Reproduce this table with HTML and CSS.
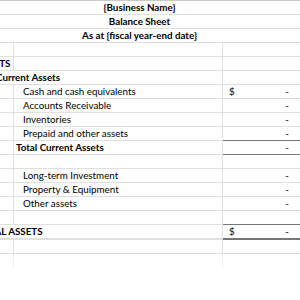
FILE: index.html
```html
<!DOCTYPE html>
<html>
<head>
<meta charset="utf-8">
<link rel="stylesheet" href="styles.css">
</head>
<body>
<div class="sheet">
  <div class="grid">
    <div class="row"><div class="merged bold">{Business Name}</div></div>
    <div class="row"><div class="merged bold">Balance Sheet</div></div>
    <div class="row"><div class="merged bold">As at {fiscal year-end date}</div></div>
    <div class="row"><div class="c a"></div><div class="c b"></div><div class="c m"></div></div>
    <div class="row"><div class="c a bold">ASSETS</div><div class="c b"></div><div class="c m"></div></div>
    <div class="row"><div class="c ab bold sub">Current Assets</div><div class="c m"></div></div>
    <div class="row"><div class="c a"></div><div class="c b item">Cash and cash equivalents</div><div class="c m"><span>$</span><span>-</span></div></div>
    <div class="row"><div class="c a"></div><div class="c b item">Accounts Receivable</div><div class="c m"><span></span><span>-</span></div></div>
    <div class="row"><div class="c a"></div><div class="c b item">Inventories</div><div class="c m"><span></span><span>-</span></div></div>
    <div class="row"><div class="c a"></div><div class="c b item">Prepaid and other assets</div><div class="c m"><span></span><span>-</span></div></div>
    <div class="row"><div class="c a"></div><div class="c b bold total">Total Current Assets</div><div class="c m boxed"><span></span><span>-</span></div></div>
    <div class="row"><div class="c a"></div><div class="c b"></div><div class="c m"></div></div>
    <div class="row"><div class="c a"></div><div class="c b item">Long-term Investment</div><div class="c m"><span></span><span>-</span></div></div>
    <div class="row"><div class="c a"></div><div class="c b item">Property &amp; Equipment</div><div class="c m"><span></span><span>-</span></div></div>
    <div class="row"><div class="c a"></div><div class="c b item">Other assets</div><div class="c m"><span></span><span>-</span></div></div>
    <div class="row"><div class="c a"></div><div class="c b"></div><div class="c m"></div></div>
    <div class="row grand"><div class="c ab bold">TOTAL ASSETS</div><div class="c m dbl"><span>$</span><span>-</span></div></div>
    <div class="row"><div class="c a"></div><div class="c b"></div><div class="c m"></div></div>
    <div class="row fade"><div class="c a"></div><div class="c b"></div><div class="c m"></div></div>
  </div>
</div>
</body>
</html>
```
FILE: styles.css
```css
html, body {
  margin: 0;
  padding: 0;
  background: #ffffff;
}
.sheet {
  width: 300px;
  height: 300px;
  overflow: hidden;
  border-top: 1px solid #c9c9c9;
  box-sizing: border-box;
  font-family: Lato, "Open Sans", sans-serif;
  font-size: 9.8px;
  color: #000000;
}
.grid {
  margin-left: -26px;
  width: 331px;
}
.row {
  display: grid;
  grid-template-columns: 40px 209px 82px;
  height: 14px;
}
.merged {
  grid-column: 1 / 4;
  text-align: center;
  border-bottom: 1px solid #e0e0e0;
  line-height: 13px;
  white-space: nowrap;
}
.c {
  border-bottom: 1px solid #e0e0e0;
  border-right: 1px solid #e0e0e0;
  line-height: 13px;
  white-space: nowrap;
  padding-left: 2px;
}
.ab {
  grid-column: 1 / 3;
}
.bold {
  font-weight: 700;
}
.sub {
  padding-left: 22px;
}
.item {
  padding-left: 9px;
}
.total {
  padding-left: 2px;
}
.m {
  display: flex;
  justify-content: space-between;
  padding-left: 6px;
  padding-right: 16px;
  border-right: none;
}
.boxed {
  border-top: 1px solid #767676;
  border-bottom: 1px solid #767676;
  margin-top: -1px;
}
.grand .c {
  border-bottom-width: 2px;
}
.grand .ab {
  border-bottom-color: #e0e0e0;
}
.dbl {
  border-top: 1px solid #767676;
  margin-top: -1px;
  border-bottom: 2px solid #767676 !important;
}
.grand {
  height: 15px;
}
.fade .c {
  border-bottom: none;
  border-right-color: #f0f0f0;
}
```
